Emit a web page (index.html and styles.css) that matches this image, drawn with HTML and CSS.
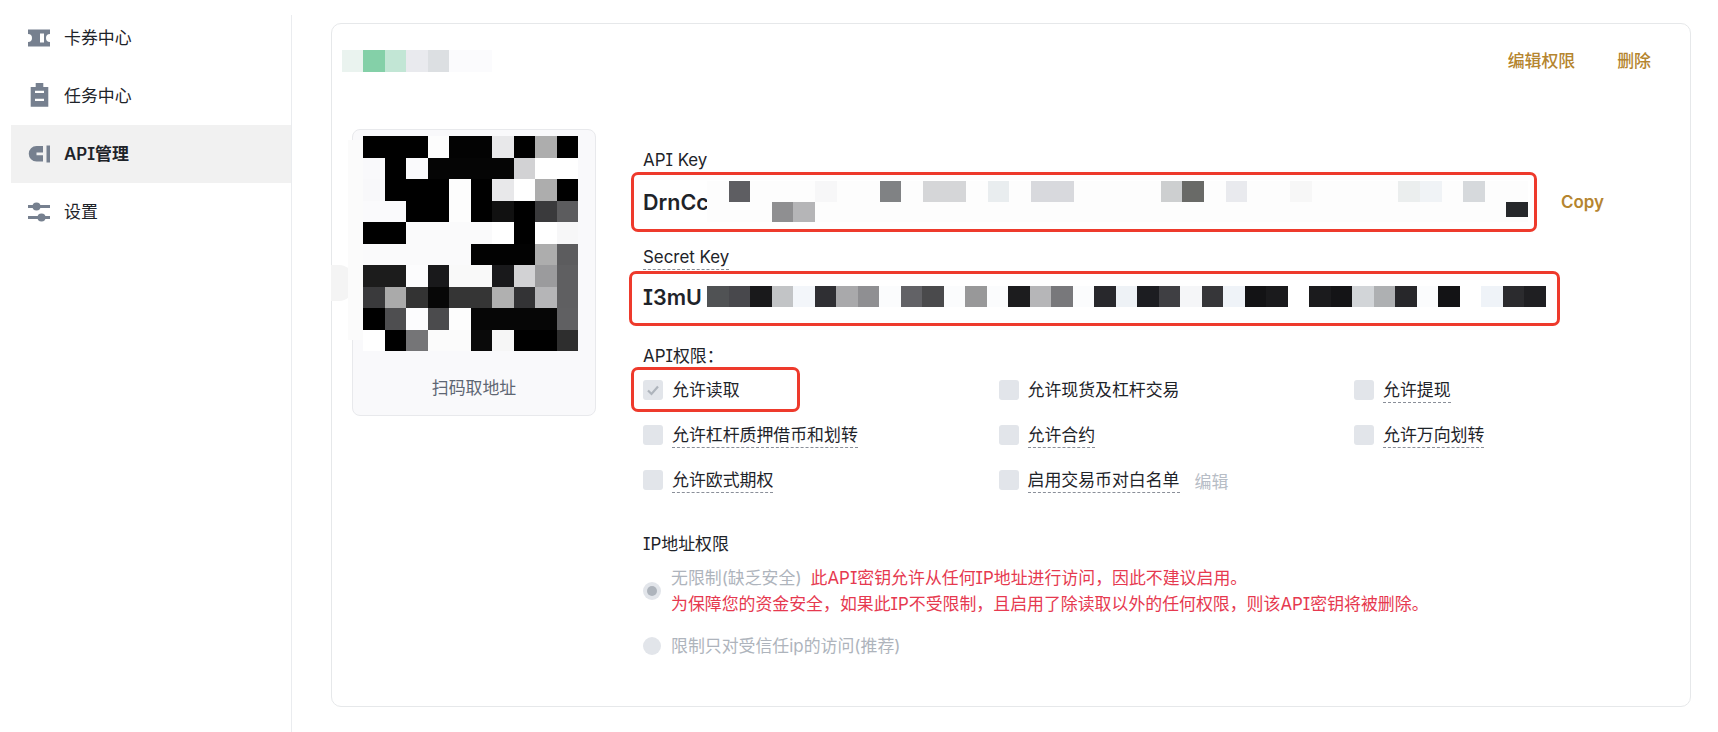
FILE: index.html
```html
<!DOCTYPE html>
<html lang="zh-CN">
<head>
    <meta charset="UTF-8">
    <title>API管理</title>
    <meta name="viewport" content="width=device-width, initial-scale=1.0">
    <link rel="stylesheet" href="styles.css">
</head>
<body>

<div class="page">
    <aside class="sidebar">
        <nav class="side-nav">
            <a class="side-item">
                <svg class="side-icon" viewBox="0 0 22 17"><path fill-rule="evenodd" d="M0 0h22v4.500a4 4 0 0 0 0 8V17H0v-4.500a4 4 0 0 0 0-8zM12 4v9h4V4z"/></svg>
                <span>卡券中心</span>
            </a>
            <a class="side-item">
                <svg class="side-icon" viewBox="0 1 22 24"><path fill-rule="evenodd" d="M7.700 0h7.600v4h5V23.700H2.700V4h5zM7 7.700V10h9V7.700zM7 15.700V18h9v-2.300z"/></svg>
                <span>任务中心</span>
            </a>
            <a class="side-item active">
                <svg class="side-icon" viewBox="0 0 22 17"><path d="M8.500.500H15V7H8.500v2.700H15v6.300H8.500A7.750 7.750 0 0 1 8.500.500zM18.500 0H22v17h-3.500z"/></svg>
                <span>API管理</span>
            </a>
            <a class="side-item">
                <svg class="side-icon" viewBox="0 0 22 20"><path d="M0 3h22v3H0zM0 14h22v3H0z"/><circle cx="8.500" cy="4.500" r="4"/><circle cx="13.500" cy="15.500" r="4"/></svg>
                <span>设置</span>
            </a>
        </nav>
    </aside>

    <main class="content">
        <section class="api-card">
            <div class="card-head">
                <svg class="mosaic title-mosaic" viewBox="0 0 7 1" preserveAspectRatio="none">
                    <rect x="0" width="1" height="1" fill="#eaf3ef"/>
                    <rect x="1" width="1" height="1" fill="#84d0a8"/>
                    <rect x="2" width="1" height="1" fill="#c2e6d5"/>
                    <rect x="3" width="1" height="1" fill="#e9eaee"/>
                    <rect x="4" width="1" height="1" fill="#dcdfe2"/>
                    <rect x="5" width="2" height="1" fill="#fbfbfd"/>
                </svg>
                <div class="card-actions">
                    <a>编辑权限</a>
                    <a>删除</a>
                </div>
            </div>

            <div class="card-body">
                <div class="qr-card">
                    <svg class="mosaic qr-mosaic" viewBox="0 0 10 10">
                        <rect x="0" y="0" width="3" height="1" fill="#000"/>
                        <rect x="4" y="0" width="2" height="1" fill="#030303"/>
                        <rect x="6" y="0" width="1" height="1" fill="#e8e8ea"/>
                        <rect x="7" y="0" width="1" height="1" fill="#000"/>
                        <rect x="8" y="0" width="1" height="1" fill="#adadad"/>
                        <rect x="9" y="0" width="1" height="1" fill="#000"/>
                        <rect x="3" y="0" width="1" height="1" fill="#fdfdfd"/>

                        <rect x="0" y="1" width="1" height="1" fill="#f9f9fb"/>
                        <rect x="1" y="1" width="1" height="1" fill="#000"/>
                        <rect x="2" y="1" width="1" height="1" fill="#fafafc"/>
                        <rect x="3" y="1" width="4" height="1" fill="#050505"/>
                        <rect x="7" y="1" width="1" height="1" fill="#d2d2d4"/>
                        <rect x="8" y="1" width="2" height="1" fill="#fff"/>

                        <rect x="0" y="2" width="1" height="1" fill="#f8f8fa"/>
                        <rect x="1" y="2" width="3" height="1" fill="#000"/>
                        <rect x="4" y="2" width="1" height="1" fill="#fdfdfd"/>
                        <rect x="5" y="2" width="1" height="1" fill="#000"/>
                        <rect x="6" y="2" width="1" height="1" fill="#e8e8ea"/>
                        <rect x="7" y="2" width="1" height="1" fill="#fff"/>
                        <rect x="8" y="2" width="1" height="1" fill="#adadad"/>
                        <rect x="9" y="2" width="1" height="1" fill="#000"/>

                        <rect x="0" y="3" width="2" height="1" fill="#fafafc"/>
                        <rect x="2" y="3" width="2" height="1" fill="#000"/>
                        <rect x="4" y="3" width="1" height="1" fill="#fdfdfd"/>
                        <rect x="5" y="3" width="1" height="1" fill="#000"/>
                        <rect x="6" y="3" width="1" height="1" fill="#111"/>
                        <rect x="7" y="3" width="1" height="1" fill="#000"/>
                        <rect x="8" y="3" width="1" height="1" fill="#3a3a3c"/>
                        <rect x="9" y="3" width="1" height="1" fill="#5c5c5e"/>

                        <rect x="0" y="4" width="2" height="1" fill="#000"/>
                        <rect x="2" y="4" width="4" height="1" fill="#fafafb"/>
                        <rect x="6" y="4" width="1" height="1" fill="#fff"/>
                        <rect x="7" y="4" width="1" height="1" fill="#000"/>
                        <rect x="8" y="4" width="1" height="1" fill="#fff"/>
                        <rect x="9" y="4" width="1" height="1" fill="#f7f7f8"/>

                        <rect x="0" y="5" width="5" height="1" fill="#fafafb"/>
                        <rect x="5" y="5" width="3" height="1" fill="#020202"/>
                        <rect x="8" y="5" width="1" height="1" fill="#adadad"/>
                        <rect x="9" y="5" width="1" height="1" fill="#5c5c5e"/>

                        <rect x="0" y="6" width="2" height="1" fill="#1c1c1c"/>
                        <rect x="2" y="6" width="1" height="1" fill="#fcfcfd"/>
                        <rect x="3" y="6" width="1" height="1" fill="#19191b"/>
                        <rect x="4" y="6" width="2" height="1" fill="#f9f9f9"/>
                        <rect x="6" y="6" width="1" height="1" fill="#19191b"/>
                        <rect x="7" y="6" width="1" height="1" fill="#d2d2d4"/>
                        <rect x="8" y="6" width="1" height="1" fill="#9b9b9d"/>
                        <rect x="9" y="6" width="1" height="1" fill="#5f5f61"/>

                        <rect x="0" y="7" width="1" height="1" fill="#3a3a3c"/>
                        <rect x="1" y="7" width="1" height="1" fill="#aaa"/>
                        <rect x="2" y="7" width="1" height="1" fill="#333"/>
                        <rect x="3" y="7" width="1" height="1" fill="#070707"/>
                        <rect x="4" y="7" width="2" height="1" fill="#353535"/>
                        <rect x="6" y="7" width="1" height="1" fill="#b0b0b0"/>
                        <rect x="7" y="7" width="1" height="1" fill="#333335"/>
                        <rect x="8" y="7" width="1" height="1" fill="#b5b5b7"/>
                        <rect x="9" y="7" width="1" height="1" fill="#5f5f61"/>

                        <rect x="0" y="8" width="1" height="1" fill="#000"/>
                        <rect x="1" y="8" width="1" height="1" fill="#4e4e50"/>
                        <rect x="2" y="8" width="1" height="1" fill="#fcfcfe"/>
                        <rect x="3" y="8" width="1" height="1" fill="#4b4b4d"/>
                        <rect x="4" y="8" width="1" height="1" fill="#fdfdfd"/>
                        <rect x="5" y="8" width="4" height="1" fill="#060606"/>
                        <rect x="9" y="8" width="1" height="1" fill="#606062"/>

                        <rect x="0" y="9" width="1" height="1" fill="#fff"/>
                        <rect x="1" y="9" width="1" height="1" fill="#000"/>
                        <rect x="2" y="9" width="1" height="1" fill="#757577"/>
                        <rect x="3" y="9" width="2" height="1" fill="#fbfbfb"/>
                        <rect x="5" y="9" width="1" height="1" fill="#0a0a0a"/>
                        <rect x="6" y="9" width="1" height="1" fill="#f6f6f6"/>
                        <rect x="7" y="9" width="2" height="1" fill="#000"/>
                        <rect x="9" y="9" width="1" height="1" fill="#2e2e2e"/>
                    </svg>
                    <p class="qr-label">扫码取地址</p>
                </div>

                <div class="details">
                    <div class="field-label">API Key</div>
                    <div class="key-row">
                        <span class="key-text">DrnCc</span>
                        <svg class="mosaic key-mosaic api-mosaic" viewBox="0 0 38 2" preserveAspectRatio="none">
                            <rect x="0" y="0" width="38" height="2" fill="#fdfdfd"/>
                            <rect x="1" y="0" width="1" height="1" fill="#5e5e62"/>
                            <rect x="5" y="0" width="1" height="1" fill="#f7f7f8"/>
                            <rect x="8" y="0" width="1" height="1" fill="#808284"/>
                            <rect x="10" y="0" width="2" height="1" fill="#d5d6d8"/>
                            <rect x="13" y="0" width="1" height="1" fill="#e9edef"/>
                            <rect x="15" y="0" width="2" height="1" fill="#d8d9dd"/>
                            <rect x="21" y="0" width="1" height="1" fill="#cdcfd0"/>
                            <rect x="22" y="0" width="1" height="1" fill="#696a67"/>
                            <rect x="24" y="0" width="1" height="1" fill="#e9eaee"/>
                            <rect x="27" y="0" width="1" height="1" fill="#f7f7f7"/>
                            <rect x="32" y="0" width="1" height="1" fill="#ebeeee"/>
                            <rect x="33" y="0" width="1" height="1" fill="#f0f3f6"/>
                            <rect x="35" y="0" width="1" height="1" fill="#d6d9dc"/>
                            <rect x="3" y="1" width="1" height="1" fill="#8f8f91"/>
                            <rect x="4" y="1" width="1" height="1" fill="#b5b5b7"/>
                            <rect x="37" y="1" width="1" height="0.75" fill="#26282b"/>
                        </svg>
                        <a class="copy-link">Copy</a>
                    </div>

                    <div class="field-label dashed">Secret Key</div>
                    <div class="key-row secret-row">
                        <span class="key-text">I3mU</span>
                        <svg class="mosaic key-mosaic secret-mosaic" viewBox="0 0 39 1" preserveAspectRatio="none">
                            <rect x="0" width="39" height="1" fill="#fbfcfd"/>
                            <rect x="0" width="1" height="1" fill="#505254"/>
                            <rect x="1" width="1" height="1" fill="#48484c"/>
                            <rect x="2" width="1" height="1" fill="#19191b"/>
                            <rect x="3" width="1" height="1" fill="#c2c4c6"/>
                            <rect x="4" width="1" height="1" fill="#f3f6fa"/>
                            <rect x="5" width="1" height="1" fill="#2f2f33"/>
                            <rect x="6" width="1" height="1" fill="#a9a9ab"/>
                            <rect x="7" width="1" height="1" fill="#8f8f92"/>
                            <rect x="9" width="1" height="1" fill="#626266"/>
                            <rect x="10" width="1" height="1" fill="#4a4a4c"/>
                            <rect x="12" width="1" height="1" fill="#989899"/>
                            <rect x="14" width="1" height="1" fill="#1c1c1e"/>
                            <rect x="15" width="1" height="1" fill="#b6b6b8"/>
                            <rect x="16" width="1" height="1" fill="#78787b"/>
                            <rect x="18" width="1" height="1" fill="#28282c"/>
                            <rect x="19" width="1" height="1" fill="#eef2f6"/>
                            <rect x="20" width="1" height="1" fill="#1c1d21"/>
                            <rect x="21" width="1" height="1" fill="#3f3f43"/>
                            <rect x="22" width="1" height="1" fill="#f5f6f8"/>
                            <rect x="23" width="1" height="1" fill="#363639"/>
                            <rect x="24" width="1" height="1" fill="#eff3f8"/>
                            <rect x="25" width="1" height="1" fill="#131315"/>
                            <rect x="26" width="1" height="1" fill="#1a1a1c"/>
                            <rect x="27" width="1" height="1" fill="#fff"/>
                            <rect x="28" width="1" height="1" fill="#1b1b1d"/>
                            <rect x="29" width="1" height="1" fill="#141416"/>
                            <rect x="30" width="1" height="1" fill="#d2d5d8"/>
                            <rect x="31" width="1" height="1" fill="#aeb0b2"/>
                            <rect x="32" width="1" height="1" fill="#27272a"/>
                            <rect x="34" width="1" height="1" fill="#131315"/>
                            <rect x="35" width="1" height="1" fill="#fff"/>
                            <rect x="36" width="1" height="1" fill="#eff3f8"/>
                            <rect x="37" width="1" height="1" fill="#2b2b2e"/>
                            <rect x="38" width="1" height="1" fill="#1f1f22"/>
                        </svg>
                    </div>

                    <div class="field-label perm-title">API权限：</div>
                    <div class="perm-grid">
                        <div class="perm">
                            <span class="check">
                                <svg viewBox="0 0 20 20"><path d="M5 10.500l3.500 3.500L15 6.500" fill="none" stroke="#aeb4bc" stroke-width="2.200"/></svg>
                            </span>
                            <span>允许读取</span>
                        </div>
                        <div class="perm">
                            <span class="check"></span>
                            <span>允许现货及杠杆交易</span>
                        </div>
                        <div class="perm">
                            <span class="check"></span>
                            <span class="tip">允许提现</span>
                        </div>
                        <div class="perm">
                            <span class="check"></span>
                            <span class="tip">允许杠杆质押借币和划转</span>
                        </div>
                        <div class="perm">
                            <span class="check"></span>
                            <span class="tip">允许合约</span>
                        </div>
                        <div class="perm">
                            <span class="check"></span>
                            <span class="tip">允许万向划转</span>
                        </div>
                        <div class="perm">
                            <span class="check"></span>
                            <span class="tip">允许欧式期权</span>
                        </div>
                        <div class="perm">
                            <span class="check"></span>
                            <span class="tip">启用交易币对白名单</span>
                            <a class="edit-link">编辑</a>
                        </div>
                    </div>

                    <div class="field-label ip-title">IP地址权限</div>
                    <div class="radio-row">
                        <span class="radio checked"></span>
                        <p class="radio-text">无限制(缺乏安全)<span class="warn warn-first">此API密钥允许从任何IP地址进行访问，因此不建议启用。</span><br><span class="warn">为保障您的资金安全，如果此IP不受限制，且启用了除读取以外的任何权限，则该API密钥将被删除。</span></p>
                    </div>
                    <div class="radio-row second">
                        <span class="radio"></span>
                        <p class="radio-text">限制只对受信任ip的访问(推荐)</p>
                    </div>

                    <!-- red annotation boxes drawn over the screenshot -->
                    <div class="mark mark-api"></div>
                    <div class="mark mark-secret"></div>
                    <div class="mark mark-read"></div>
                </div>
            </div>

            <div class="smudge smudge-blob"></div>
            <div class="smudge smudge-side"></div>
        </section>
    </main>
</div>

</body>
</html>
```
FILE: styles.css
```css
* {
    box-sizing: border-box;
}

body {
    margin: 0;
    background: #fff;
    color: #1e2329;
    font-family: Inter, "Noto Sans CJK SC", sans-serif;
    font-feature-settings: "cv08";
    font-size: 16.9px;
    line-height: 24px;
    overflow: hidden;
}

p {
    margin: 0;
}

.page {
    display: flex;
    height: 732px;
}

.sidebar {
    flex: none;
    width: 292px;
    margin-top: 15px;
    padding-left: 11px;
    border-right: 1px solid #eaecef;
}

.side-nav {
    margin-top: -6px;
}

.side-item {
    display: flex;
    align-items: center;
    gap: 14px;
    height: 58px;
    padding-left: 17px;
}

.side-item.active {
    background: #f1f1f1;
    font-weight: 600;
}

.side-icon {
    width: 22px;
    height: 24px;
    fill: #76808f;
    flex: none;
    overflow: visible;
}

.content {
    flex: 1;
    min-width: 0;
    padding: 23px 27px 25px 39px;
}

.api-card {
    position: relative;
    height: 684px;
    border: 1px solid #e6e8ea;
    border-radius: 10px;
}

.card-head {
    display: flex;
    align-items: center;
    justify-content: space-between;
    height: 105px;
    padding: 26px 39px 57px 10px;
}

.mosaic {
    display: block;
    flex: none;
    shape-rendering: crispEdges;
}

.title-mosaic {
    width: 150px;
    height: 22px;
}

.card-actions {
    display: flex;
    gap: 42px;
    color: #b5852f;
    font-weight: 500;
}

.card-body {
    display: flex;
    gap: 47px;
    padding-left: 20px;
}

.qr-card {
    flex: none;
    width: 244px;
    height: 287px;
    padding: 6px 0 0 10px;
    background: #f9f9fb;
    border: 1px solid #e8e9ec;
    border-radius: 8px;
}

.qr-mosaic {
    width: 215px;
    height: 215px;
}

.qr-label {
    margin: 25px 0 0 -10px;
    color: #5e6673;
    text-align: center;
}

.details {
    position: relative;
    flex: 1;
    min-width: 0;
    padding-top: 19px;
}

.field-label {
    height: 24px;
}

.dashed {
    width: max-content;
    height: 25px;
    margin-top: 13px;
    border-bottom: 1px dashed #8a8f99;
}

.key-row {
    display: flex;
    align-items: center;
    height: 60px;
}

.secret-row {
    height: 54px;
}

.key-text {
    width: 64px;
    flex: none;
    font-size: 21.5px;
    font-weight: 600;
    white-space: nowrap;
}

.key-mosaic {
    position: relative;
    margin-bottom: 1px;
}

.api-mosaic {
    width: 821px;
    height: 41px;
}

.secret-mosaic {
    width: 839px;
    height: 21px;
}

.copy-link {
    margin-left: 33px;
    color: #b5852f;
    font-weight: 600;
}

.perm-title {
    margin-top: 20px;
}

.perm-grid {
    display: grid;
    grid-template-columns: repeat(3, 355.5px);
    grid-auto-rows: 45px;
    margin-top: -1px;
}

.perm {
    display: flex;
    align-items: flex-start;
    gap: 9px;
    padding-top: 11px;
}

.check {
    width: 20px;
    height: 20px;
    margin-top: 2px;
    flex: none;
    background: #e2e5ea;
    border-radius: 3px;
}

.check svg {
    display: block;
}

.tip {
    height: 25px;
    border-bottom: 1px dashed #8a8f99;
}

.edit-link {
    margin: 2px 0 0 6px;
    color: #b7bdc6;
}

.ip-title {
    margin-top: 30px;
}

.radio-row {
    display: flex;
    align-items: center;
    gap: 10px;
    margin-top: 9px;
}

.radio-row.second {
    margin-top: 16px;
}

.radio {
    display: flex;
    align-items: center;
    justify-content: center;
    width: 18px;
    height: 18px;
    flex: none;
    background: #e2e5ea;
    border-radius: 50%;
}

.radio.checked::after {
    content: "";
    width: 10px;
    height: 10px;
    background: #aeb4bc;
    border-radius: 50%;
}

.radio-text {
    color: #aeb4bc;
    line-height: 26px;
}

.warn {
    color: #e6394f;
}

.warn-first {
    margin-left: 9px;
}

.mark {
    position: absolute;
    border: 3px solid #ee3a2c;
    border-radius: 7px;
}

.mark-api {
    top: 43px;
    left: -12px;
    width: 906px;
    height: 60px;
}

.mark-secret {
    top: 142px;
    left: -14px;
    width: 931px;
    height: 55px;
}

.mark-read {
    top: 238px;
    left: -12px;
    width: 169px;
    height: 45px;
}

.smudge {
    position: absolute;
}

.smudge-blob {
    top: 241px;
    left: -1px;
    width: 22px;
    height: 36px;
    background: #f4f4f4;
    border-radius: 0 14px 14px 0;
}

.smudge-side {
    top: 116px;
    left: 16px;
    width: 15px;
    height: 200px;
    background: #fbfbfb;
}
```
